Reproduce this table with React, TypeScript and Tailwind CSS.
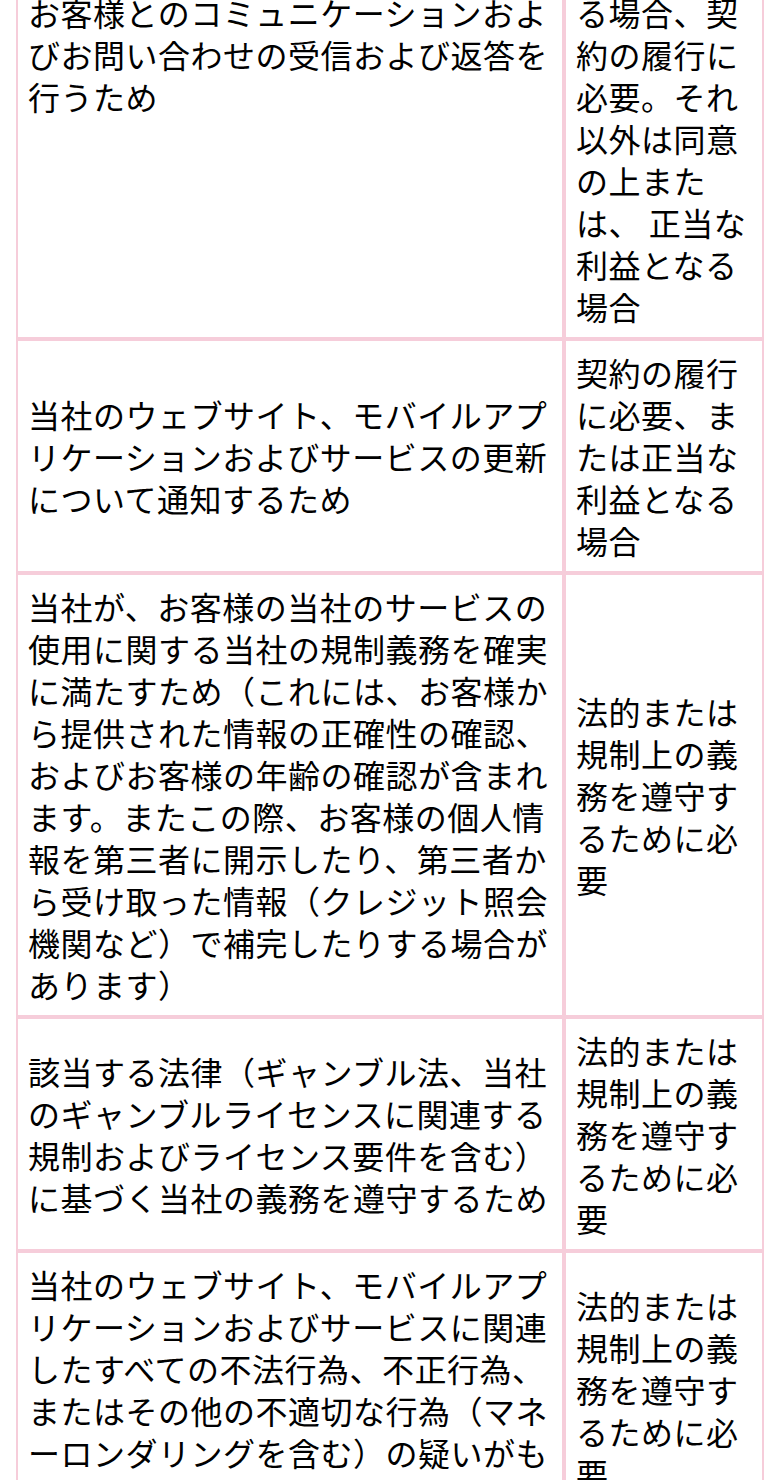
const rows: { purpose: string; basis: string }[] = [
  {
    purpose: 'お客様とのコミュニケーションおよびお問い合わせの受信および返答を行うため',
    basis:
      'お客様が当社のアカウントを開設してサービスを利用する場合、契約の履行に必要。それ以外は同意の上または、 正当な利益となる場合',
  },
  {
    purpose: '当社のウェブサイト、モバイルアプリケーションおよびサービスの更新について通知するため',
    basis: '契約の履行に必要、または正当な利益となる場合',
  },
  {
    purpose:
      '当社が、お客様の当社のサービスの使用に関する当社の規制義務を確実に満たすため（これには、お客様から提供された情報の正確性の確認、およびお客様の年齢の確認が含まれます。またこの際、お客様の個人情報を第三者に開示したり、第三者から受け取った情報（クレジット照会機関など）で補完したりする場合があります）',
    basis: '法的または規制上の義務を遵守するために必要',
  },
  {
    purpose:
      '該当する法律（ギャンブル法、当社のギャンブルライセンスに関連する規制およびライセンス要件を含む）に基づく当社の義務を遵守するため',
    basis: '法的または規制上の義務を遵守するために必要',
  },
  {
    purpose:
      '当社のウェブサイト、モバイルアプリケーションおよびサービスに関連したすべての不法行為、不正行為、またはその他の不適切な行為（マネーロンダリングを含む）の疑いがもたれる場合、その検知と調査のため',
    basis: '法的または規制上の義務を遵守するために必要',
  },
];

export default function App() {
  return (
    <div
      className="min-h-screen bg-white text-black"
      style={{ fontFamily: '"Noto Sans CJK JP", "Noto Sans", sans-serif' }}
    >
      {/* page is scrolled into the middle of the table */}
      <table className="mx-4 -mt-[231px] w-[748px] table-fixed border-separate border-spacing-0 text-[32px] leading-[42px] tracking-[0.5px]">
        <colgroup>
          <col className="w-[548px]" />
          <col className="w-[200px]" />
        </colgroup>
        <tbody>
          {rows.map((row, i) => (
            <tr key={i}>
              <td className="border-2 border-[#f6cdda] px-[10px] py-[10px] align-middle">
                {row.purpose}
              </td>
              <td className="border-2 border-[#f6cdda] px-[10px] py-[10px] align-middle">
                {row.basis}
              </td>
            </tr>
          ))}
        </tbody>
      </table>
    </div>
  );
}
